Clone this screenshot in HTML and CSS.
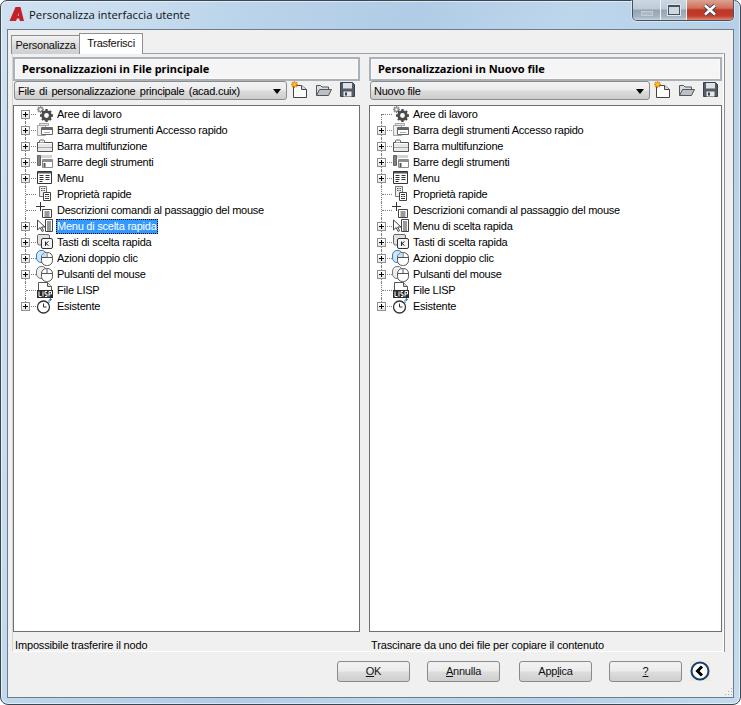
FILE: index.html
```html
<!DOCTYPE html>
<html lang="it">
<head>
<meta charset="utf-8">
<title>Personalizza interfaccia utente</title>
<link rel="stylesheet" href="styles.css">
</head>
<body>
<svg class="sprites" width="0" height="0" aria-hidden="true">
  <symbol id="i-gear" viewBox="0 0 18 16">
    <g fill="none" stroke="#8a8a8a" stroke-width="1.3"><circle cx="4.500" cy="3.500" r="1.900"/><path d="M4.500 0v1.500M4.500 5.500V7M1 3.500h1.500M6.500 3.500H8M2 1l1 1M6 5l1 1M7 1 6 2M3 5 2 6"/></g>
    <circle cx="10.500" cy="9.500" r="3.800" fill="none" stroke="#4a4a4a" stroke-width="2.800"/>
    <path d="M10.500 3v2.500M10.500 13.500V16M4 9.500h2.500M14.500 9.500H17M6 5l2 2M13 12l2 2M15 5l-2 2M8 12l-2 2" stroke="#4a4a4a" stroke-width="2.300"/>
  </symbol>
  <symbol id="i-qat" viewBox="0 0 18 16">
    <path d="M3.500 1.500h9v2h-9z" fill="#e6e6e6" stroke="#a5a5a5"/>
    <path d="M1.500 3.500h8v10h-8z" fill="#eee" stroke="#a5a5a5"/>
    <path d="M5.500 5.500h11v7h-11z" fill="#fff" stroke="#666"/>
    <path d="M6 6h10v2H6z" fill="#666"/>
    <path d="M8 10.500h6" stroke="#aaa"/>
  </symbol>
  <symbol id="i-ribbon" viewBox="0 0 18 16">
    <path d="M1.500 4.500v9h15v-9z" fill="#e8e8e8" stroke="#555"/>
    <path d="M3.500 4.500V3a1 1 0 0 1 1-1h3a1 1 0 0 1 1 1v1.500" fill="#f4f4f4" stroke="#666"/>
    <path d="M2 5.500h14" stroke="#fff"/>
    <path d="M2 9.500h14" stroke="#aaa"/>
  </symbol>
  <symbol id="i-toolbars" viewBox="0 0 18 16">
    <path d="M1 1h15v3H1z" fill="#d4d4d4"/>
    <path d="M1.500 1.500h3v10h-3z" fill="#808080" stroke="#666"/>
    <path d="M6.500 5.500h10v8h-10z" fill="#fff" stroke="#8a8a8a"/>
    <path d="M7 6h9v2H7z" fill="#8e8e8e"/>
    <path d="M7.500 9h2v4h-2z" fill="#555"/>
  </symbol>
  <symbol id="i-menu" viewBox="0 0 18 16">
    <path d="M1.500 1.500h14v12h-14z" fill="#fff" stroke="#333"/>
    <path d="M2 2h13v1.500H2z" fill="#555"/>
    <path d="M3.500 5.500h4M3.500 7.500h4M3.500 9.500h4M3.500 11.500h3M9.500 5.500h4M9.500 7.500h4M9.500 9.500h4" stroke="#333"/>
  </symbol>
  <symbol id="i-props" viewBox="0 0 18 16">
    <path d="M3.500.5h7v10h-7z" fill="#eee" stroke="#777"/>
    <path d="M5 2.500h1.500M7.500 2.500H9M5 4.500h1.500M7.500 4.500H9" stroke="#555"/>
    <path d="M7.500 6.500h7v8h-7z" fill="#fff" stroke="#444"/>
    <path d="M9 8.500h4M9 10.500h1.500M11.500 10.500H13M9 12.500h4" stroke="#333"/>
  </symbol>
  <symbol id="i-tips" viewBox="0 0 18 16">
    <path d="M4.500 0v9M0 4.500h9" stroke="#333"/>
    <path d="M6.500 7.500h9v8h-9z" fill="#fff" stroke="#444"/>
    <path d="M8.500 10h5M8.500 12h5M8.500 14h5" stroke="#333"/>
  </symbol>
  <symbol id="i-ctx" viewBox="0 0 18 16">
    <path d="M1.500 2v10l2.600-2.500 2 4 1.500-.8-2-3.700h3.400z" fill="#fff" stroke="#444"/>
    <path d="M9.500 1.500h7v12h-7z" fill="#fff" stroke="#444"/>
    <path d="M11 4h4M11 6h4M11 8h4M11 10h4M11 12h4" stroke="#333"/>
  </symbol>
  <symbol id="i-key" viewBox="0 0 18 16">
    <path d="M1.500 1.500a1.500 1.500 0 0 1 1.500-1h9a1.500 1.500 0 0 1 1.500 1.500v3h-7v6h-3a2 2 0 0 1-2-2z" fill="#e2e2e2" stroke="#666"/>
    <rect x="5.500" y="4.500" width="11" height="10" rx="1.500" fill="#f4f4f4" stroke="#333"/>
    <path d="M9.500 7.500v4.500M12.500 7.500l-2.500 2 2.500 2" fill="none" stroke="#222"/>
  </symbol>
  <symbol id="i-dbl" viewBox="0 0 18 16">
    <rect x="0.500" y="0.500" width="10" height="12" rx="4.500" fill="#cfe6fa" stroke="#2f7fc4"/>
    <rect x="5.500" y="2.500" width="11" height="13" rx="5" fill="#fff" stroke="#555"/>
    <path d="M11 2.500v5M5.500 7.500h11" stroke="#555"/>
    <path d="M6 7V6a4 4 0 0 1 4.500-3v4z" fill="#c9def0"/>
  </symbol>
  <symbol id="i-mouse" viewBox="0 0 18 16">
    <rect x="0.500" y="0.500" width="10" height="12" rx="4.500" fill="#eee" stroke="#777"/>
    <rect x="5.500" y="2.500" width="11" height="13" rx="5" fill="#fff" stroke="#555"/>
    <path d="M11 2.500v5M5.500 7.500h11" stroke="#555"/>
  </symbol>
  <symbol id="i-lisp" viewBox="0 0 18 16">
    <path d="M2.500.5h9l4 4v6h-13z" fill="#fff" stroke="#555"/>
    <path d="M11.500.5v4h4" fill="#ddd" stroke="#555"/>
    <path d="M1 8h16v8H1z" fill="#2b2b2b"/>
    <path d="M3 9.500v5h2.500M7 9.500v5M11 9.500H9v2.500h2v2.500H9M13 14.500v-5h2.500v2.500H13" fill="none" stroke="#fff"/>
  </symbol>
  <symbol id="i-legacy" viewBox="0 0 18 16">
    <circle cx="7.500" cy="9" r="6" fill="#fff" stroke="#333" stroke-width="1.300"/>
    <path d="M7.500 5.500V9h3" fill="none" stroke="#333"/>
    <path d="M13 5V2.500a1 1 0 0 1 1-1h2" fill="none" stroke="#2f7fc4"/>
    <path d="M14.500 0v3" stroke="#2f7fc4"/>
  </symbol>
  <symbol id="i-new" viewBox="0 0 18 18">
    <path d="M2.500 4.500h8l5 4v8h-13z" fill="#fff" stroke="#444"/>
    <path d="M10.500 4.500v4h5" fill="#ddd" stroke="#444"/>
    <path d="M3.500 0v7M0 3.500h7M1 1l5 5M6 1L1 6" stroke="#ee8a10" stroke-width="1.300"/>
    <circle cx="3.500" cy="3.500" r="1.300" fill="#ffd23c"/>
  </symbol>
  <symbol id="i-open" viewBox="0 0 18 18">
    <path d="M1.500 14.500v-10h4l1.500 1.500h6.500v2.500" fill="#d8dde2" stroke="#555"/>
    <path d="M1.500 14.500 4.500 8.500h12l-3 6z" fill="#b9c0c7" stroke="#555"/>
  </symbol>
  <symbol id="i-save" viewBox="0 0 18 18">
    <path d="M1.500 1.500h12l2 2v12h-14z" fill="#545c66" stroke="#39404a"/>
    <path d="M4 2h9v5.500H4z" fill="#dfe3e7"/>
    <path d="M4.500 10.500h8v5h-8z" fill="#e6e8ea"/>
    <path d="M6 11.500h2v3H6z" fill="#39404a"/>
  </symbol>
</svg>

<div class="window">
  <header class="titlebar">
    <svg class="app-logo" width="16" height="16" viewBox="0 0 16 16" aria-hidden="true"><path d="M.5 15 6.500 1h5L15 15h-4.200l-.6-2.500H8L7 15zM8.700 10h1.100L9.300 6.500z" fill="#c32127"/></svg>
    <span class="title">Personalizza interfaccia utente</span>
    <div class="caption">
      <span class="cap cap-min"><i></i></span>
      <span class="cap cap-max"><i></i></span>
      <span class="cap cap-close">
        <svg width="18" height="12" viewBox="0 0 18 12" aria-hidden="true"><path d="M4 1.500l10 9M14 1.500l-10 9" stroke="#3d4650" stroke-width="4.500"/><path d="M4 1.500l10 9M14 1.500l-10 9" stroke="#fff" stroke-width="2.500"/></svg>
      </span>
    </div>
  </header>

  <div class="client">
    <nav class="tabs">
      <span class="tab">Personalizza</span>
      <span class="tab tab-active">Trasferisci</span>
    </nav>

    <main class="page">
      <section class="panel panel-left">
        <h2 class="panel-head">Personalizzazioni in File principale</h2>
        <div class="toolrow">
          <div class="combo"><span class="combo-text combo-wide">File di personalizzazione principale (acad.cuix)</span><span class="combo-arrow"></span></div>
          <div class="tools">
            <svg width="18" height="18"><use href="#i-new"/></svg>
            <svg width="18" height="18"><use href="#i-open"/></svg>
            <svg width="18" height="18"><use href="#i-save"/></svg>
          </div>
        </div>
        <ul class="tree">
          <li class="row"><span class="twist"></span><svg class="icon"><use href="#i-gear"/></svg><span class="label">Aree di lavoro</span></li>
          <li class="row"><span class="twist"></span><svg class="icon"><use href="#i-qat"/></svg><span class="label">Barra degli strumenti Accesso rapido</span></li>
          <li class="row"><span class="twist"></span><svg class="icon"><use href="#i-ribbon"/></svg><span class="label">Barra multifunzione</span></li>
          <li class="row"><span class="twist"></span><svg class="icon"><use href="#i-toolbars"/></svg><span class="label">Barre degli strumenti</span></li>
          <li class="row"><span class="twist"></span><svg class="icon"><use href="#i-menu"/></svg><span class="label">Menu</span></li>
          <li class="row"><span class="leaf"></span><svg class="icon"><use href="#i-props"/></svg><span class="label">Proprietà rapide</span></li>
          <li class="row"><span class="leaf"></span><svg class="icon"><use href="#i-tips"/></svg><span class="label">Descrizioni comandi al passaggio del mouse</span></li>
          <li class="row"><span class="twist"></span><svg class="icon"><use href="#i-ctx"/></svg><span class="label label-selected">Menu di scelta rapida</span></li>
          <li class="row"><span class="twist"></span><svg class="icon"><use href="#i-key"/></svg><span class="label">Tasti di scelta rapida</span></li>
          <li class="row"><span class="twist"></span><svg class="icon"><use href="#i-dbl"/></svg><span class="label">Azioni doppio clic</span></li>
          <li class="row"><span class="twist"></span><svg class="icon"><use href="#i-mouse"/></svg><span class="label">Pulsanti del mouse</span></li>
          <li class="row"><span class="leaf"></span><svg class="icon"><use href="#i-lisp"/></svg><span class="label">File LISP</span></li>
          <li class="row"><span class="twist"></span><svg class="icon"><use href="#i-legacy"/></svg><span class="label">Esistente</span></li>
        </ul>
        <p class="status">Impossibile trasferire il nodo</p>
      </section>

      <section class="panel panel-right">
        <h2 class="panel-head">Personalizzazioni in Nuovo file</h2>
        <div class="toolrow">
          <div class="combo"><span class="combo-text">Nuovo file</span><span class="combo-arrow"></span></div>
          <div class="tools">
            <svg width="18" height="18"><use href="#i-new"/></svg>
            <svg width="18" height="18"><use href="#i-open"/></svg>
            <svg width="18" height="18"><use href="#i-save"/></svg>
          </div>
        </div>
        <ul class="tree">
          <li class="row"><span class="leaf"></span><svg class="icon"><use href="#i-gear"/></svg><span class="label">Aree di lavoro</span></li>
          <li class="row"><span class="twist"></span><svg class="icon"><use href="#i-qat"/></svg><span class="label">Barra degli strumenti Accesso rapido</span></li>
          <li class="row"><span class="twist"></span><svg class="icon"><use href="#i-ribbon"/></svg><span class="label">Barra multifunzione</span></li>
          <li class="row"><span class="twist"></span><svg class="icon"><use href="#i-toolbars"/></svg><span class="label">Barre degli strumenti</span></li>
          <li class="row"><span class="twist"></span><svg class="icon"><use href="#i-menu"/></svg><span class="label">Menu</span></li>
          <li class="row"><span class="leaf"></span><svg class="icon"><use href="#i-props"/></svg><span class="label">Proprietà rapide</span></li>
          <li class="row"><span class="leaf"></span><svg class="icon"><use href="#i-tips"/></svg><span class="label">Descrizioni comandi al passaggio del mouse</span></li>
          <li class="row"><span class="twist"></span><svg class="icon"><use href="#i-ctx"/></svg><span class="label">Menu di scelta rapida</span></li>
          <li class="row"><span class="twist"></span><svg class="icon"><use href="#i-key"/></svg><span class="label">Tasti di scelta rapida</span></li>
          <li class="row"><span class="twist"></span><svg class="icon"><use href="#i-dbl"/></svg><span class="label">Azioni doppio clic</span></li>
          <li class="row"><span class="twist"></span><svg class="icon"><use href="#i-mouse"/></svg><span class="label">Pulsanti del mouse</span></li>
          <li class="row"><span class="leaf"></span><svg class="icon"><use href="#i-lisp"/></svg><span class="label">File LISP</span></li>
          <li class="row"><span class="twist"></span><svg class="icon"><use href="#i-legacy"/></svg><span class="label">Esistente</span></li>
        </ul>
        <p class="status">Trascinare da uno dei file per copiare il contenuto</p>
      </section>
    </main>

    <footer class="footer">
      <button class="btn btn-ok"><u>O</u>K</button>
      <button class="btn btn-cancel"><u>A</u>nnulla</button>
      <button class="btn btn-apply">App<u>l</u>ica</button>
      <button class="btn btn-help"><u>?</u></button>
      <span class="collapse">
        <svg width="20" height="20" viewBox="0 0 20 20" aria-hidden="true"><circle cx="10" cy="10" r="8.500" fill="#fff" stroke="#123f78" stroke-width="2"/><path d="M12 5.500 7.500 10l4.500 4.500" fill="none" stroke="#000" stroke-width="3"/></svg>
      </span>
      <svg class="grip" width="10" height="10" viewBox="0 0 10 10" aria-hidden="true"><path d="M8 1h1v1H8zM8 4h1v1H8zM8 7h1v1H8zM5 4h1v1H5zM5 7h1v1H5zM2 7h1v1H2z" fill="#a8a8a8"/></svg>
    </footer>
  </div>
</div>
</body>
</html>
```

FILE: styles.css
```css
* { box-sizing: border-box; }

html, body {
  margin: 0;
  width: 741px;
  height: 705px;
  background: #fff;
  overflow: hidden;
}

body {
  font-family: "Liberation Sans", Arial, sans-serif;
  font-size: 11px;
  letter-spacing: -.24px;
  color: #000;
}

.sprites { position: absolute; }

.window {
  width: 741px;
  height: 705px;
  display: flex;
  flex-direction: column;
  padding: 0 6px 6px;
  border: 1px solid #3c4650;
  border-radius: 7px 7px 8px 8px;
  background: linear-gradient(105deg, #cfe1f1 0%, #c7dcef 15%, #b9d3ea 28%, #b0cce6 45%, #bdd6ec 62%, #b6d0e9 80%, #c4dbef 100%);
  box-shadow: inset 0 0 0 1px rgba(255, 255, 255, .55);
}

/* Title bar */
.titlebar {
  height: 28px;
  flex: none;
  display: flex;
  align-items: center;
  position: relative;
  padding-bottom: 2px;
}

.app-logo { margin: 0 0 0 2px; flex: none; }

.title {
  margin-left: 4px;
  font-family: "Open Sans", sans-serif;
  font-size: 11.3px;
  letter-spacing: 0;
  color: #111;
}

.caption {
  display: flex;
  position: absolute;
  top: -1px;
  right: 0;
  height: 21px;
  border: 1px solid #47525c;
  border-top: 0;
  border-radius: 0 0 5px 5px;
  overflow: hidden;
  box-shadow: 0 0 0 1px rgba(255, 255, 255, .4);
}

.cap {
  display: flex;
  align-items: center;
  justify-content: center;
  background: linear-gradient(#cbd8e4 0%, #bfccd8 45%, #94a3b1 50%, #a7b5c2 85%, #c6d3df 100%);
  border-right: 1px solid #eef3f7;
}

.cap-min { width: 28px; }
.cap-min i { display: block; width: 12px; height: 5px; margin-top: 6px; background: #aeb9c3; border: 1px solid #c5ced6; }

.cap-max { width: 26px; }
.cap-max i { display: block; width: 12px; height: 10px; border: 1px solid #46525e; border-top-width: 2px; box-shadow: 0 0 0 1px #e0e6ec; background: #cfd8e0; }

.cap-close {
  width: 46px;
  border-right: 0;
  background: linear-gradient(#dba392 0%, #d2705a 40%, #bd3626 50%, #c13d2b 80%, #dd8a74 100%);
}

/* Client area */
.client {
  flex: 1;
  min-height: 0;
  display: flex;
  flex-direction: column;
  background: #f0f0f0;
  border: 1px solid #6e7c8a;
}

.tabs {
  height: 24px;
  flex: none;
  display: flex;
  align-items: flex-end;
  padding-left: 3px;
  margin-bottom: -1px;
  position: relative;
  z-index: 1;
}

.tab {
  height: 19px;
  width: 69px;
  text-align: center;
  line-height: 18px;
  border: 1px solid #8e8e8e;
  border-bottom: 0;
  background: linear-gradient(#f3f3f3, #dcdcdc 50%, #cfcfcf);
  color: #111;
}

.tab-active {
  height: 21px;
  width: 64px;
  margin-left: -1px;
  line-height: 18px;
  background: #fff;
  border-color: #8e8e8e;
  padding-bottom: 2px;
}

.page {
  flex: 1;
  min-height: 0;
  margin: 0 9px 0 4px;
  padding: 3px 0 0;
  display: grid;
  grid-template-columns: 347px 353px;
  column-gap: 9px;
  border-top: 1px solid #a0a0a0;
  border-left: 1px solid #d4d4d4;
  border-right: 1px solid #fff;
  border-bottom: 1px solid #fff;
  background: #f0f0f0;
  box-shadow: 1px 0 0 #8e8e8e;
}

.panel {
  display: flex;
  flex-direction: column;
  min-width: 0;
}

.panel-head {
  height: 24px;
  margin: 0;
  padding: 0 0 1px 9px;
  display: flex;
  align-items: center;
  font-family: "Noto Sans", sans-serif;
  font-size: 11px;
  font-weight: 700;
  letter-spacing: 0;
  background: #f5f5f5;
  outline: 2px solid #a9b2ba;
  outline-offset: -2px;
  box-shadow: inset 0 0 0 3px #fafafa;
}

.toolrow {
  height: 24px;
  flex: none;
  display: flex;
  align-items: flex-start;
  padding-left: 1px;
}

.combo {
  width: 273px;
  height: 19px;
  flex: none;
  display: flex;
  align-items: center;
  padding: 1px 5px 0 3px;
  border: 1px solid #8b8b8b;
  border-radius: 3px;
  background: linear-gradient(#f3f3f3 0%, #ececec 48%, #dcdcdc 52%, #cdcdcd 100%);
}

.panel-right .combo { width: 280px; }

.combo-text { flex: 1; white-space: nowrap; overflow: hidden; }
.combo-wide { word-spacing: 1.500px; }

.combo-arrow {
  width: 0;
  height: 0;
  border-left: 4px solid transparent;
  border-right: 4px solid transparent;
  border-top: 5px solid #000;
}

.tools {
  display: flex;
  gap: 6px;
  margin-left: 4px;
  height: 18px;
}

.tree {
  flex: none;
  height: 527px;
  margin: 0;
  padding: 0;
  list-style: none;
  background: #fff;
  border: 1px solid #6f6f6f;
}

.row {
  position: relative;
  height: 16px;
  display: flex;
  align-items: center;
  padding-left: 7px;
}

.row::before {
  content: "";
  position: absolute;
  left: 11px;
  top: 0;
  bottom: 0;
  border-left: 1px dotted #808080;
}

.row::after {
  content: "";
  position: absolute;
  left: 12px;
  top: 8px;
  width: 10px;
  border-top: 1px dotted #808080;
}

.row:first-child::before { top: 8px; }
.row:last-child::before { bottom: 8px; }

.twist, .leaf {
  width: 9px;
  height: 9px;
  flex: none;
  position: relative;
  z-index: 1;
}

.twist {
  border: 1px solid #919191;
  background:
    linear-gradient(#000, #000) center / 5px 1px no-repeat,
    linear-gradient(#000, #000) center / 1px 5px no-repeat,
    linear-gradient(#fff, #e4e4e4);
}

.icon {
  width: 18px;
  height: 16px;
  flex: none;
  margin-left: 6px;
  position: relative;
  z-index: 1;
}

.label {
  margin-left: 2px;
  padding: 0 1px;
  line-height: 15px;
  white-space: nowrap;
}

.label-selected {
  color: #fff;
  background: #3399ff;
  outline: 1px dotted #000;
  outline-offset: -1px;
}

.status {
  margin: 0;
  height: 20px;
  padding: 6px 0 0 2px;
  line-height: 14px;
  white-space: nowrap;
  letter-spacing: -.15px;
}

/* Footer */
.footer {
  height: 45px;
  flex: none;
  display: flex;
  align-items: flex-start;
  padding: 9px 0 0 329px;
  position: relative;
}

.btn {
  width: 73px;
  height: 21px;
  padding: 0 0 1px;
  margin-right: 17px;
  font: inherit;
  letter-spacing: inherit;
  color: #111;
  border: 1px solid #8a8a8a;
  border-radius: 3px;
  background: linear-gradient(#f2f2f2 0%, #ebebeb 48%, #dddddd 52%, #cfcfcf 100%);
}

.btn-cancel { margin-right: 19px; }
.btn-help { margin-right: 8px; }

.collapse {
  width: 20px;
  height: 20px;
  display: block;
  background: #f0ead6;
}

.collapse svg { display: block; }

.grip {
  position: absolute;
  right: 0;
  bottom: 0;
}
```
